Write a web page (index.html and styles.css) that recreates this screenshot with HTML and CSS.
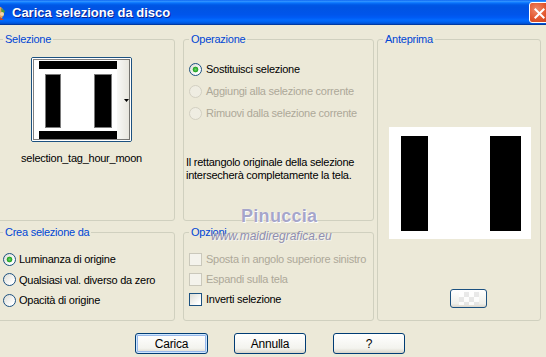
FILE: index.html
```html
<!DOCTYPE html>
<html>
	<head>
		<meta charset="UTF-8">
		<title>Carica selezione da disco</title>
		<link rel="stylesheet" href="styles.css">
	</head>
	<body>
		<div class="window">
			<div class="titlebar">
				<svg class="app-icon" width="16" height="16" viewBox="0 0 16 16">
					<circle cx="8" cy="8" r="7" fill="#E9A15A"/>
					<path d="M12 3l4 3-3 6z" fill="#4E9A3A"/>
					<circle cx="13" cy="9" r="2" fill="#F4D2A8"/>
					<path d="M11 12l4 3h-5z" fill="#C0472A"/>
				</svg>
				<span class="title">Carica selezione da disco</span>
				<span class="close">
					<svg width="21" height="21" viewBox="0 0 21 21">
						<path d="M6 6l9 9M15 6l-9 9" stroke="#fff" stroke-width="2.2" stroke-linecap="square"/>
					</svg>
				</span>
			</div>

			<div class="panels">
				<fieldset class="group sel">
					<legend>Selezione</legend>
					<div class="thumb">
						<svg width="99" height="83" viewBox="0 0 99 83">
							<defs>
								<linearGradient id="strip" x1="0" x2="1">
									<stop offset="0" stop-color="#F8F8F6"/>
									<stop offset="1" stop-color="#E6E4DC"/>
								</linearGradient>
							</defs>
							<rect width="99" height="83" fill="#fff"/>
							<rect x="85" y="1" width="13" height="81" fill="url(#strip)"/>
							<rect x="7" y="3" width="78" height="8" fill="#000"/>
							<rect x="13.5" y="16.5" width="15" height="53" fill="#000" stroke="#7a7a7a"/>
							<rect x="62.5" y="16.5" width="17" height="53" fill="#000" stroke="#7a7a7a"/>
							<rect x="7" y="73" width="78" height="8" fill="#000"/>
							<path d="M92 41h5l-2.5 3z" fill="#000"/>
							<rect x="1.5" y="1.5" width="96" height="80" fill="none" stroke="#000" stroke-dasharray="1 1"/>
						</svg>
					</div>
					<div class="thumb-name">selection_tag_hour_moon</div>
				</fieldset>

				<fieldset class="group oper">
					<legend>Operazione</legend>
					<div class="opt"><span class="radio on"></span>Sostituisci selezione</div>
					<div class="opt off"><span class="radio"></span>Aggiungi alla selezione corrente</div>
					<div class="opt off"><span class="radio"></span>Rimuovi dalla selezione corrente</div>
					<p class="note">Il rettangolo originale della selezione<br>intersecherà completamente la tela.</p>
				</fieldset>

				<fieldset class="group preview">
					<legend>Anteprima</legend>
					<div class="canvas">
						<div class="bar bar-l"></div>
						<div class="bar bar-r"></div>
					</div>
					<div class="swatch-btn"><span class="checker"></span></div>
				</fieldset>

				<fieldset class="group crea">
					<legend>Crea selezione da</legend>
					<div class="opt"><span class="radio on"></span>Luminanza di origine</div>
					<div class="opt"><span class="radio"></span>Qualsiasi val. diverso da zero</div>
					<div class="opt"><span class="radio"></span>Opacità di origine</div>
				</fieldset>

				<fieldset class="group opz">
					<legend>Opzioni</legend>
					<div class="opt off"><span class="check"></span>Sposta in angolo superiore sinistro</div>
					<div class="opt off"><span class="check"></span>Espandi sulla tela</div>
					<div class="opt"><span class="check"></span>Inverti selezione</div>
				</fieldset>
			</div>

			<div class="buttons">
				<button class="btn default">Carica</button>
				<button class="btn">Annulla</button>
				<button class="btn help">?</button>
			</div>

			<div class="wm-name">Pinuccia</div>
			<div class="wm-site">www.maidiregrafica.eu</div>
		</div>
	</body>
</html>
```

FILE: styles.css
```css
*{margin:0;padding:0;box-sizing:border-box;}
body{width:546px;height:357px;overflow:hidden;background:#ECE9D8;font-family:"Liberation Sans",Arial,sans-serif;font-size:11px;color:#000;letter-spacing:-0.25px;}
.window{position:relative;height:357px;}

/* barra del titolo */
.titlebar{height:25px;margin-right:-4px;display:flex;align-items:center;background:linear-gradient(#0058EE 0%,#3593FF 4%,#288EFF 7%,#127DFF 10%,#0262EE 16%,#0057E5 22%,#0054E3 30%,#0055EB 58%,#005BF5 70%,#026AFE 80%,#0062EF 88%,#0052D6 94%,#0040AB 97%,#003092 100%);}
.app-icon{flex:none;margin-left:-11px;}
.title{flex:1;margin-left:7px;color:#fff;font-weight:bold;font-size:13px;letter-spacing:0;text-shadow:1px 1px 0 #0A1E8C;}
.close{flex:none;width:21px;height:21px;border:1px solid #fff;border-radius:3px;background:radial-gradient(circle at 35% 35%,#F08B6A 0,#E2552C 55%,#C3401E 100%);display:flex;}

/* gruppi */
.panels{display:grid;grid-template-columns:178px 8px 191px 3px 164px;grid-template-rows:188px 95px;row-gap:5px;margin:8px 0 0 -3px;}
.group{border:1px solid #D0D0BF;border-radius:3px;min-width:0;display:flex;flex-direction:column;}
.group legend{margin-left:5px;padding:0 2px;color:#0046D5;line-height:13px;}
.sel{grid-column:1;grid-row:1;align-items:center;padding-right:9px;}
.oper{grid-column:3;grid-row:1;padding-top:12px;}
.preview{grid-column:5;grid-row:1 / 3;}
.crea{grid-column:1;grid-row:2;padding-top:10px;}
.opz{grid-column:3;grid-row:2;padding-top:10px;}

.thumb{margin-top:11px;width:101px;height:85px;border:1px solid #1C5180;border-radius:2px;overflow:hidden;}
.thumb svg{display:block;}
.thumb-name{margin-top:10px;line-height:13px;}

.opt{display:flex;align-items:center;gap:4px;height:22px;margin-left:5px;}
.crea .opt{height:20.5px;gap:3px;}
.opz .opt{height:20px;}
.opt.off{color:#ACA899;}
.radio{flex:none;width:13px;height:13px;border-radius:50%;border:1px solid #1C5180;background:linear-gradient(135deg,#DCDCD5,#fff 80%);}
.radio.on{background:radial-gradient(circle,#6AD86A 0,#21A121 2.5px,rgba(33,161,33,0) 3.2px),linear-gradient(135deg,#DCDCD5,#fff 80%);}
.off .radio{border-color:#D3D0C2;background:#EFEDE2;}
.check{flex:none;width:13px;height:13px;border:1px solid #1C5180;background:linear-gradient(135deg,#DCDCD5,#fff 80%);}
.off .check{border-color:#CAC8BB;background:#F4F3EC;}
.note{margin:32px 0 0 2px;line-height:13px;}

.canvas{margin:81px 0 0 11px;width:142px;height:112px;background:#fff;display:flex;justify-content:space-between;padding:9px 10px 8px 12px;}
.bar{background:#000;}
.bar-l{width:27px;}
.bar-r{width:31px;}
.swatch-btn{margin:50px 0 0 72px;width:37px;height:19px;border:1px solid #1C5180;border-radius:3px;background:linear-gradient(#fff,#F0F0EA 80%,#DAD6CC);display:flex;align-items:center;justify-content:center;}
.checker{width:20px;height:13px;background:conic-gradient(#E4E4E4 25%,#fff 0 50%,#E4E4E4 0 75%,#fff 0) 0 0/10px 10px;opacity:.8;}

/* pulsanti */
.buttons{display:flex;margin:12px 0 0 135px;gap:26px;}
.btn{width:72px;height:21px;font-family:inherit;font-size:12px;letter-spacing:-0.2px;color:#000;border:1px solid #003C74;border-radius:3px;background:linear-gradient(#fff,#F3F3EE 75%,#D8D4C9);}
.btn.default{width:73px;box-shadow:inset 0 0 0 1px #CEE7FF,inset 0 0 0 2px #98B8EA;}
.btn.help{margin-left:1px;}

/* filigrana */
.wm-name{position:absolute;left:241px;top:206px;font-size:18px;font-weight:bold;letter-spacing:0.3px;color:#A6A6CA;text-shadow:0 0 1px #fff,1px 1px 0 #fff;}
.wm-site{position:absolute;left:211px;top:229px;font-size:12px;font-style:italic;letter-spacing:0;color:#8E8EB0;text-shadow:1px 1px 0 #F4F3EE;}
```
